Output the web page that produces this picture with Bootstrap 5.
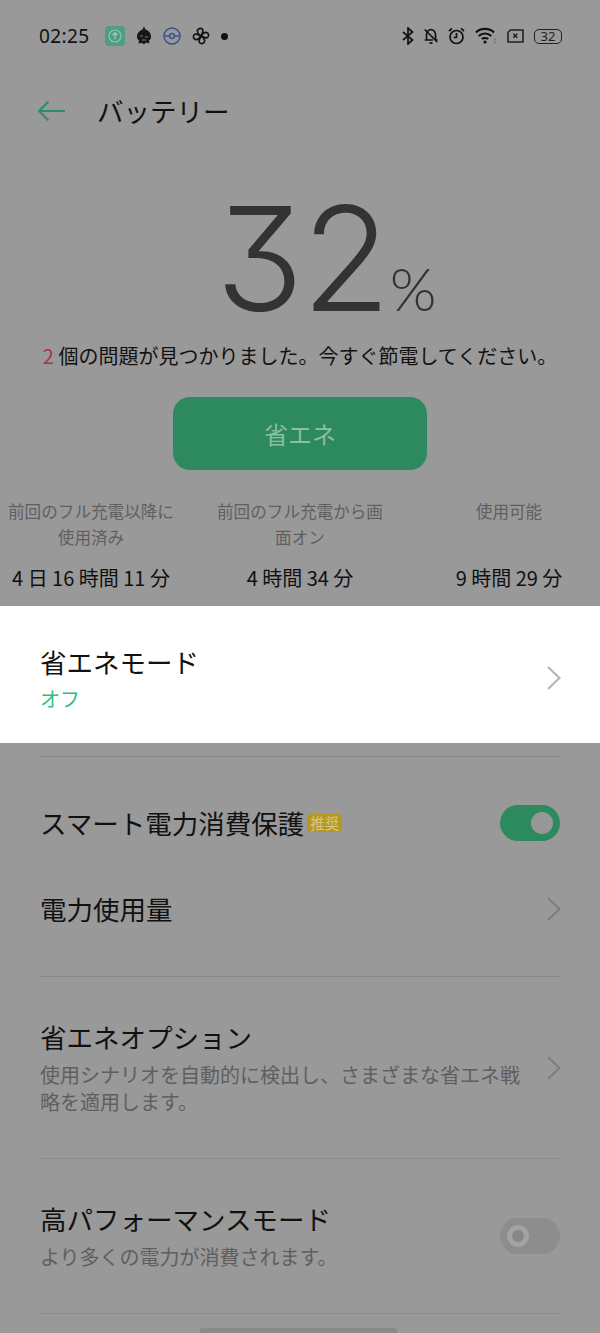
<!DOCTYPE html>
<html lang="ja"><head><meta charset="utf-8">
<link href="https://cdn.jsdelivr.net/npm/bootstrap@5.3.0/dist/css/bootstrap.min.css" rel="stylesheet">
<style>
html,body{height:1333px;overflow:hidden}
body{background:#999;font-family:"Noto Sans CJK JP","Noto Sans",sans-serif;color:#111;width:600px;position:relative}
.sbar{height:72px;padding:0 38px 0 39px}
.clock{font:400 19px/1 "Noto Sans",sans-serif;letter-spacing:.4px;color:#111;margin-right:15px}
.sicons{gap:11px}
.sright{gap:10px}
.topbar{height:78px;padding-left:37px}
.toptitle{font-size:26.5px;font-weight:400;line-height:1;margin:0 0 0 31px;color:#111}
.bighold{height:192px;padding-top:44px;padding-left:52px;color:#333}
.bignum{font:300 145px/130px Inter,Lato,sans-serif;font-feature-settings:"cv09" 1;letter-spacing:-2px}
.bigpct{font:300 60px/50px Lato,sans-serif;margin-left:1px}
.msg{height:55px;font-size:20px;line-height:28px;text-align:center;margin:0;color:#111}
.msg b{font-weight:400;color:#a8324c}
.savebtn{width:254px;height:73px;background:#2d8a5e;border:0;border-radius:17px;color:#8dbda3;font-size:24px;display:block;margin:0 auto 28px}
.stats{height:108px;column-gap:27px}
.stat{width:182px;flex:none;text-align:center;display:flex;flex-direction:column;align-items:center}
.statlab{font-size:16.6px;line-height:26px;color:#5f5f5f;height:52px}
.statval{font-size:20px;line-height:28px;color:#111;margin-top:14px;white-space:nowrap}
.hilite{background:#fff;height:137px;padding:7px 40px 0}
.rowtitle{font-size:26.5px;line-height:36px;color:#111}
.offtxt{font-size:20px;line-height:28px;color:#2ec07f;margin-top:5px}
.setrow{padding:0 40px}
.rule{height:1px;background:#8a8a8a;margin:0 40px}
.r0{margin-top:13px}
.r1{height:106px;padding-top:26px}
.r2{height:113px;padding-top:27px;padding-bottom:48px}
.r3{height:181px}.r4{height:154px}
.subtxt{font-size:20px;line-height:27px;color:#5f5f5f;max-width:484px;margin-top:6px}
.blurb{min-width:0;flex:1;padding-bottom:2px}
.tagchip{background:#b8971f;color:#d3c88c;font-size:14.5px;line-height:18px;border-radius:4px;padding:0 3px;margin-left:3px;height:18px}
.tog{width:60px;height:36px;border-radius:18px;flex:none}
.togon{background:#2d8a5e;padding-right:7px}
.togon i{width:22px;height:22px;border-radius:50%;background:#979797;display:block}
.togoff{background:#8d8d8d;padding-left:7px}
.togoff i{width:22px;height:22px;border-radius:50%;border:5px solid #a3a3a3;background:#878787;display:block}
.chev{flex:none;margin-right:-1px;margin-left:20px}
.batt{width:28px;height:15px;border:1.500px solid #222;border-radius:5px;font:400 13px/12px "Noto Sans",sans-serif;justify-content:center;color:#222}
.handle{position:absolute;left:200px;bottom:0;width:197px;height:5px;background:#8a8a8a;border-radius:3px 3px 0 0}
</style></head><body>
<div class="sbar d-flex align-items-center justify-content-between">
  <div class="d-flex align-items-center">
    <span class="clock">02:25</span>
    <div class="d-flex align-items-center sicons">
      <svg width="20" height="20" viewBox="0 0 20 20"><rect width="20" height="20" rx="4" fill="#4f9d83"/><circle cx="10" cy="10" r="6" fill="none" stroke="#94c2b0" stroke-width="1.2"/><path d="M10 13.500V7M7.700 9 10 6.700 12.300 9" fill="none" stroke="#a9cfc0" stroke-width="1.100"/></svg>
      <svg width="16" height="20" viewBox="0 0 16 20"><path d="M8 0.500 9.500 3.500C12.500 4.500 15 7 15 10.500 15 12.500 14.500 13.800 13 14.500L13.500 17.500 10 16.500 8 18.500 6 17 2.500 17.500 3 14.500C1.500 13.500 1 12 1 10.500 1 7 4 4.500 6.500 3.500Z" fill="#171717"/><path d="M4 10h3M9 11h3M6 14h4" stroke="#777" stroke-width="1.200"/></svg>
      <svg width="18" height="18" viewBox="0 0 18 18"><circle cx="9" cy="9" r="8" fill="none" stroke="#3d4f8f" stroke-width="1.500"/><path d="M1 9h5M12 9h5" stroke="#3d4f8f" stroke-width="1.500"/><circle cx="9" cy="9" r="2.400" fill="none" stroke="#3d4f8f" stroke-width="1.500"/></svg>
      <svg width="18" height="18" viewBox="0 0 18 18" fill="none" stroke="#111" stroke-width="1.700"><path d="M9 9C6.500 7.500 5 5.500 5.500 3.300 6.300 1 10 .7 10.800 3 11.200 5 10 7 9 9Z"/><path d="M9 9C10.500 6.500 12.500 5 14.700 5.500 17 6.300 17.300 10 15 10.800 13 11.200 11 10 9 9Z"/><path d="M9 9C11.500 10.500 13 12.500 12.500 14.700 11.700 17 8 17.300 7.200 15 6.800 13 8 11 9 9Z"/><path d="M9 9C7.500 11.500 5.500 13 3.300 12.500 1 11.700 .7 8 3 7.200 5 6.800 7 8 9 9Z"/></svg>
      <svg width="7" height="7" viewBox="0 0 7 7"><circle cx="3.500" cy="3.500" r="3.500" fill="#111"/></svg>
    </div>
  </div>
  <div class="d-flex align-items-center sright">
    <svg width="12" height="18" viewBox="0 0 12 18" fill="none" stroke="#111" stroke-width="1.700"><path d="M1 5 10.500 13 6 17V1L10.500 5 1 13"/></svg>
    <svg width="14" height="18" viewBox="0 0 14 18" fill="none" stroke="#111" stroke-width="1.700"><path d="M2.500 13V8C2.500 5 4 3 7 2.500 10 3 11.500 5 11.500 8V13H13.500M.7 13H9"/><path d="M.7 2.500 13.300 15"/><path d="M5.500 16h3"/></svg>
    <svg width="17" height="18" viewBox="0 0 17 18" fill="none" stroke="#111" stroke-width="1.700"><circle cx="8.500" cy="10" r="6.500"/><path d="M8.500 6v4.500H5.500M1 4 4 1.300M16 4 13 1.300"/></svg>
    <svg width="22" height="18" viewBox="0 0 22 18" fill="none" stroke="#111" stroke-width="2.200"><path d="M1 5.500C5.500 .7 14.500 .7 19 5.500M3.700 9C7.500 5.700 12.500 5.700 16.300 9M6.800 12C8.500 10.700 11.500 10.700 13.200 12"/><circle cx="10" cy="15" r="1.600" fill="#111" stroke="none"/><path d="M20 11l1.600 2.200h-3.200zM20 17l1.600-2.200h-3.200z" fill="#777" stroke="none"/></svg>
    <svg width="17" height="14" viewBox="0 0 17 14" fill="none" stroke="#222" stroke-width="1.600"><path d="M3.500 1H16V13H1V3.500Z"/><path d="M6.300 4.800l4 4M10.300 4.800l-4 4"/></svg>
    <div class="batt d-flex align-items-center">32</div>
  </div>
</div>
<div class="topbar d-flex align-items-center">
  <svg width="29" height="22" viewBox="0 0 29 22" fill="none" stroke="#2b8f63" stroke-width="2"><path d="M28 11H2M11.500 1.500 2 11 11.500 20.500"/></svg>
  <h1 class="toptitle">バッテリー</h1>
</div>
<div class="bighold d-flex justify-content-center align-items-baseline">
  <span class="bignum">32</span><span class="bigpct">%</span>
</div>
<p class="msg"><b>2</b> 個の問題が見つかりました。今すぐ節電してください。</p>
<button class="savebtn" type="button">省エネ</button>
<div class="stats d-flex justify-content-between">
  <div class="stat"><div class="statlab">前回のフル充電以降に使用済み</div><div class="statval">4 日 16 時間 11 分</div></div>
  <div class="stat"><div class="statlab">前回のフル充電から画面オン</div><div class="statval">4 時間 34 分</div></div>
  <div class="stat"><div class="statlab">使用可能</div><div class="statval">9 時間 29 分</div></div>
</div>
<div class="hilite d-flex align-items-center justify-content-between">
  <div><div class="rowtitle">省エネモード</div><div class="offtxt">オフ</div></div>
  <svg class="chev" width="14" height="24" viewBox="0 0 14 24" fill="none" stroke="#b3b3b3" stroke-width="2"><path d="M1 1 12.500 12 1 23"/></svg>
</div>
<div class="rule r0"></div>
<div class="setrow r1 d-flex align-items-center justify-content-between">
  <div class="d-flex align-items-center"><span class="rowtitle">スマート電力消費保護</span><span class="tagchip">推奨</span></div>
  <div class="tog togon d-flex align-items-center justify-content-end"><i></i></div>
</div>
<div class="setrow r2 d-flex align-items-center justify-content-between">
  <div class="rowtitle">電力使用量</div>
  <svg class="chev" width="14" height="24" viewBox="0 0 14 24" fill="none" stroke="#7d7d7d" stroke-width="2"><path d="M1 1 12.500 12 1 23"/></svg>
</div>
<div class="rule"></div>
<div class="setrow d-flex align-items-center justify-content-between r3">
  <div class="blurb"><div class="rowtitle">省エネオプション</div><div class="subtxt">使用シナリオを自動的に検出し、さまざまな省エネ戦略を適用します。</div></div>
  <svg class="chev" width="14" height="24" viewBox="0 0 14 24" fill="none" stroke="#7d7d7d" stroke-width="2"><path d="M1 1 12.500 12 1 23"/></svg>
</div>
<div class="rule"></div>
<div class="setrow d-flex align-items-center justify-content-between r4">
  <div class="blurb"><div class="rowtitle">高パフォーマンスモード</div><div class="subtxt">より多くの電力が消費されます。</div></div>
  <div class="tog togoff d-flex align-items-center"><i></i></div>
</div>
<div class="rule"></div>
<div class="handle"></div>
<script src="https://cdn.jsdelivr.net/npm/bootstrap@5.3.0/dist/js/bootstrap.bundle.min.js"></script>
</body></html>
